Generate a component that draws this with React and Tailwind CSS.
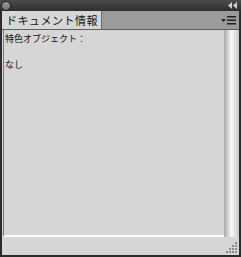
import React from 'react';

const font = { fontFamily: '"Noto Sans CJK JP", "Noto Sans", sans-serif' };

const Grip = () => {
  // resize grip dots, lower right
  const dots = [];
  for (let r = 0; r < 4; r++) {
    for (let c = 0; c <= r; c++) {
      dots.push(<rect key={`${r}-${c}`} x={9 - c * 3} y={r * 3} width="2" height="2" fill="#8a8a8a" />);
    }
  }
  return (
    <svg width="11" height="11" viewBox="0 0 11 11">
      {dots}
    </svg>
  );
};

const App = () => {
  return (
    <div className="w-[241px] h-[257px] bg-[#2c2c2c] flex flex-col" style={font}>
      {/* title bar */}
      <div className="h-[11px] flex items-center justify-between px-[1px] bg-gradient-to-b from-[#4c4c4c] to-[#2e2e2e]">
        <div className="w-[10px] h-[10px] rounded-full bg-gradient-to-b from-[#a0a0a0] to-[#6c6c6c] border border-[#1e1e1e]" />
        <svg width="9" height="7" viewBox="0 0 9 7" className="mr-[3px]">
          <polygon points="4,0 4,7 0,3.5" fill="#d0d0d0" />
          <polygon points="9,0 9,7 5,3.5" fill="#d0d0d0" />
        </svg>
      </div>

      <div className="flex-1 flex flex-col mx-[2px] mb-[2px]">
        {/* tab row */}
        <div className="h-[19px] flex bg-[#9b9b9b] border-b border-[#5f5f5f]">
          <div className="w-[100px] bg-[#d6d6d6] flex items-center pl-[4px] text-[11px] text-[#111] leading-none tracking-[0.5px] whitespace-nowrap overflow-hidden border-r border-[#6a6a6a]">
            ドキュメント情報
          </div>
          <div className="flex-1 flex items-center justify-end pr-[3px]">
            <svg width="15" height="9" viewBox="0 0 15 9">
              <polygon points="0,3 5,3 2.5,6" fill="#222" />
              <rect x="6" y="0" width="9" height="1.5" fill="#222" />
              <rect x="6" y="3.5" width="9" height="1.5" fill="#222" />
              <rect x="6" y="7" width="9" height="1.5" fill="#222" />
            </svg>
          </div>
        </div>

        {/* body */}
        <div className="flex-1 bg-[#d6d6d6] flex flex-col">
          <div className="flex-1 flex">
            <div className="flex-1 ml-px border-l border-[#7a7a7a] border-b-2 border-b-[#fafafa] pl-[1px] pt-[3px] text-[9px] text-[#111] leading-[12px] whitespace-nowrap">
              <p>特色オブジェクト：</p>
              <p className="mt-[14px]">なし</p>
            </div>
            <div className="w-[15px] bg-gradient-to-r from-[#a9a9a9] via-[#fafafa] to-[#c8c8c8]" />
          </div>
          <div className="h-[18px] flex items-end justify-end pr-[2px] pb-[2px]">
            <Grip />
          </div>
        </div>
      </div>
    </div>
  );
};

export default App;
